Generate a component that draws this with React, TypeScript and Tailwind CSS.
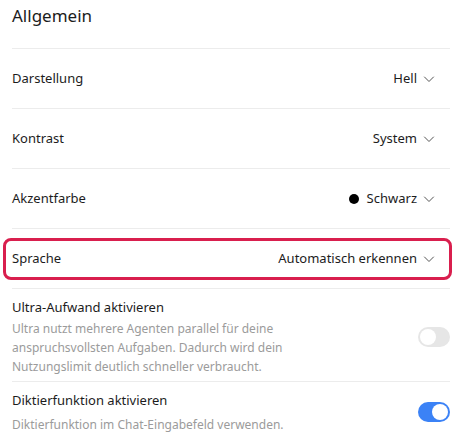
import React from "react";

const Chevron = () => (
  <svg width="12" height="12" viewBox="0 0 12 12" fill="none" className="ml-[6px] text-[#555]">
    <path d="M1.5 4 L6 8.5 L10.5 4" stroke="currentColor" strokeWidth="1" strokeLinecap="round" strokeLinejoin="round" />
  </svg>
);

function SelectRow({ label, value, dot }: { label: string; value: string; dot?: boolean }) {
  return (
    <div className="flex h-[60px] items-center justify-between border-b border-[#ececec] pr-[15px]">
      <span>{label}</span>
      <span className="flex items-center">
        {dot && <span className="mr-[8px] inline-block h-[10px] w-[10px] rounded-full bg-black" />}
        {value}
        <Chevron />
      </span>
    </div>
  );
}

function Toggle({ on }: { on: boolean }) {
  return (
    <div
      className={`flex h-[20px] w-[32px] shrink-0 items-center rounded-full px-[2px] ${
        on ? "justify-end bg-[#3b82f6]" : "justify-start bg-[#e6e6e6]"
      }`}
    >
      <div className="h-[16px] w-[16px] rounded-full bg-white" />
    </div>
  );
}

export default function App() {
  return (
    <div
      className="h-[445px] w-[460px] overflow-hidden bg-white pl-3 pr-[10px] text-[13px] text-[#1c1c1c]"
      style={{ fontFamily: '"Noto Sans", "Open Sans", sans-serif' }}
    >
      <div className="h-[49px] border-b border-[#ececec] pt-[2px] text-[17px] leading-[28px]">Allgemein</div>
      <SelectRow label="Darstellung" value="Hell" />
      <SelectRow label="Kontrast" value="System" />
      <SelectRow label="Akzentfarbe" value="Schwarz" dot />
      <div className="flex h-[60px] items-center border-b border-[#ececec]">
        <div className="-ml-[9px] -mr-[2px] flex h-[42px] flex-1 items-center justify-between rounded-[8px] border-[3px] border-[#d91f4e] pl-[6px] pr-[14px]">
          <span>Sprache</span>
          <span className="flex items-center">
            Automatisch erkennen
            <Chevron />
          </span>
        </div>
      </div>
      <div className="flex items-center justify-between border-b border-[#ececec] pb-[5px] pt-[8px]">
        <div>
          <div className="leading-[20px]">Ultra-Aufwand aktivieren</div>
          <div className="mt-[2px] max-w-[286px] text-[12px] leading-[19px] text-[#9b9b9b]">
            Ultra nutzt mehrere Agenten parallel für deine anspruchsvollsten Aufgaben. Dadurch wird dein Nutzungslimit
            deutlich schneller verbraucht.
          </div>
        </div>
        <Toggle on={false} />
      </div>
      <div className="flex items-center justify-between pt-[8px]">
        <div>
          <div className="leading-[20px]">Diktierfunktion aktivieren</div>
          <div className="mt-[5px] text-[12px] leading-[19px] text-[#9b9b9b]">
            Diktierfunktion im Chat-Eingabefeld verwenden.
          </div>
        </div>
        <Toggle on={true} />
      </div>
    </div>
  );
}
